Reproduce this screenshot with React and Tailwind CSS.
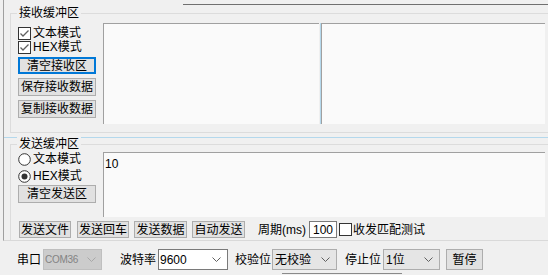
import React from "react";

function Check({ checked }) {
  return (
    <svg width="13" height="13" viewBox="0 0 13 13" className="shrink-0">
      <rect x="0.5" y="0.5" width="12" height="12" fill="#ffffff" stroke="#333333" />
      {checked && (
        <polyline points="2.5,6.5 5,9 10.5,3.5" fill="none" stroke="#606060" strokeWidth="1.3" />
      )}
    </svg>
  );
}

function Radio({ checked }) {
  return (
    <svg width="13" height="13" viewBox="0 0 13 13" className="shrink-0">
      <circle cx="6.5" cy="6.5" r="5.8" fill="#ffffff" stroke="#333333" />
      {checked && <circle cx="6.5" cy="6.5" r="3" fill="#333333" />}
    </svg>
  );
}

function Chevron({ color = "#606060" }) {
  return (
    <svg width="9" height="5" viewBox="0 0 9 5" className="shrink-0">
      <polyline points="0.5,0.5 4.5,4.5 8.5,0.5" fill="none" stroke={color} strokeWidth="1" />
    </svg>
  );
}

function Btn({ children, className = "", focused }) {
  return (
    <div
      className={`flex items-center justify-center bg-[#e1e1e1] ${
        focused ? "border-2 border-[#0078d7]" : "border border-[#adadad]"
      } ${className}`}
    >
      {children}
    </div>
  );
}

function Legend({ children }) {
  return (
    <span className="absolute left-[6px] top-[-8px] px-[2px] bg-[#f0f0f0] leading-[14px]">
      {children}
    </span>
  );
}

export default function App() {
  return (
    <div className="w-[548px] h-[275px] bg-[#f0f0f0] overflow-hidden text-[12px] leading-[14px] text-black font-['Liberation_Sans','Noto_Sans_CJK_SC',sans-serif]">
      <div className="ml-[3px] h-[241px] border-l border-b border-l-[#a0a0a0] border-b-[#d9d9d9] flex flex-col">
        <div className="mt-[4px] ml-[179px] h-px bg-[#707070]" />

        {/* 接收缓冲区 */}
        <div className="relative ml-[6px] mt-[8px] h-[120px] border-l border-t border-b border-[#dcdcdc] flex">
          <Legend>接收缓冲区</Legend>
          <div className="ml-[7px] w-[80px] pt-[12px] flex flex-col">
            <div className="flex items-center gap-[2px] h-[14px]">
              <Check checked />
              <span>文本模式</span>
            </div>
            <div className="flex items-center gap-[2px] h-[14px]">
              <Check checked />
              <span>HEX模式</span>
            </div>
            <Btn focused className="mt-[3px] w-[78px] h-[17px]">清空接收区</Btn>
            <Btn className="mt-[4px] w-[78px] h-[18px]">保存接收数据</Btn>
            <Btn className="mt-[4px] w-[78px] h-[18px]">复制接收数据</Btn>
          </div>
          <div className="ml-[5px] mt-[9px] h-[101px] w-[216px] bg-[#fafafa] border-t border-l border-[#a0a0a0]" />
          <div className="mt-[9px] h-[101px] w-[2px] border-r border-[#b4d8ec]" />
          <div className="mt-[9px] h-[101px] w-[224px] bg-[#fafafa] border-t border-l border-[#a0a0a0]" />
        </div>

        <div className="mt-[4px] h-px bg-[#b4d8ec]" />

        {/* 发送缓冲区 */}
        <div className="relative ml-[6px] mt-[6px] flex-1 border-l border-t border-[#dcdcdc] flex flex-col">
          <Legend>发送缓冲区</Legend>
          <div className="flex h-[72px]">
            <div className="ml-[7px] w-[80px] pt-[7px] flex flex-col">
              <div className="flex items-center gap-[2px] h-[14px]">
                <Radio />
                <span>文本模式</span>
              </div>
              <div className="mt-[3px] flex items-center gap-[2px] h-[14px]">
                <Radio checked />
                <span>HEX模式</span>
              </div>
              <Btn className="mt-[2px] w-[78px] h-[18px]">清空发送区</Btn>
            </div>
            <div className="ml-[5px] mt-[7px] h-[65px] w-[442px] bg-[#fafafa] border-t border-l border-[#a0a0a0] pl-[1px] pt-[4px]">
              10
            </div>
          </div>
          <div className="mt-[4px] ml-[8px] flex items-center h-[17px]">
            <Btn className="w-[52px] h-[17px]">发送文件</Btn>
            <Btn className="ml-[6px] w-[52px] h-[17px]">发送回车</Btn>
            <Btn className="ml-[5px] w-[53px] h-[17px]">发送数据</Btn>
            <Btn className="ml-[5px] w-[53px] h-[17px]">自动发送</Btn>
            <span className="ml-[13px]">周期(ms)</span>
            <div className="ml-[3px] w-[28px] h-[17px] bg-white border border-[#7a7a7a] flex items-center justify-center">
              100
            </div>
            <div className="ml-[2px]">
              <Check />
            </div>
            <span className="ml-px">收发匹配测试</span>
          </div>
        </div>
      </div>

      {/* 串口参数 */}
      <div className="mt-[8px] flex items-center h-[21px] pl-[17px]">
        <span className="w-[24px]">串口</span>
        <div className="ml-[2px] w-[59px] h-[21px] bg-[#cccccc] border border-[#bfbfbf] flex items-center justify-between pl-px pr-[5px] text-[#838383]">
          <span className="text-[10px] tracking-[-0.3px]">COM36</span>
          <Chevron color="#a8a8a8" />
        </div>
        <span className="ml-[18px] w-[36px]">波特率</span>
        <div className="ml-[2px] w-[70px] h-[21px] bg-white border border-[#7a7a7a] flex items-center justify-between pl-px pr-[6px]">
          <span>9600</span>
          <Chevron />
        </div>
        <span className="ml-[7px] w-[36px]">校验位</span>
        <div className="ml-px w-[65px] h-[21px] bg-[#e5e5e5] border border-[#adadad] flex items-center justify-between pl-[2px] pr-[6px]">
          <span>无校验</span>
          <Chevron />
        </div>
        <span className="ml-[8px] w-[36px]">停止位</span>
        <div className="ml-[2px] w-[57px] h-[21px] bg-[#e5e5e5] border border-[#adadad] flex items-center justify-between pl-[2px] pr-[6px]">
          <span>1位</span>
          <Chevron />
        </div>
        <Btn className="ml-[6px] w-[37px] h-[21px]">暂停</Btn>
      </div>
      <div className="mt-[3px] ml-[282px] w-[120px] h-px bg-[#8a8a8a]" />
    </div>
  );
}
